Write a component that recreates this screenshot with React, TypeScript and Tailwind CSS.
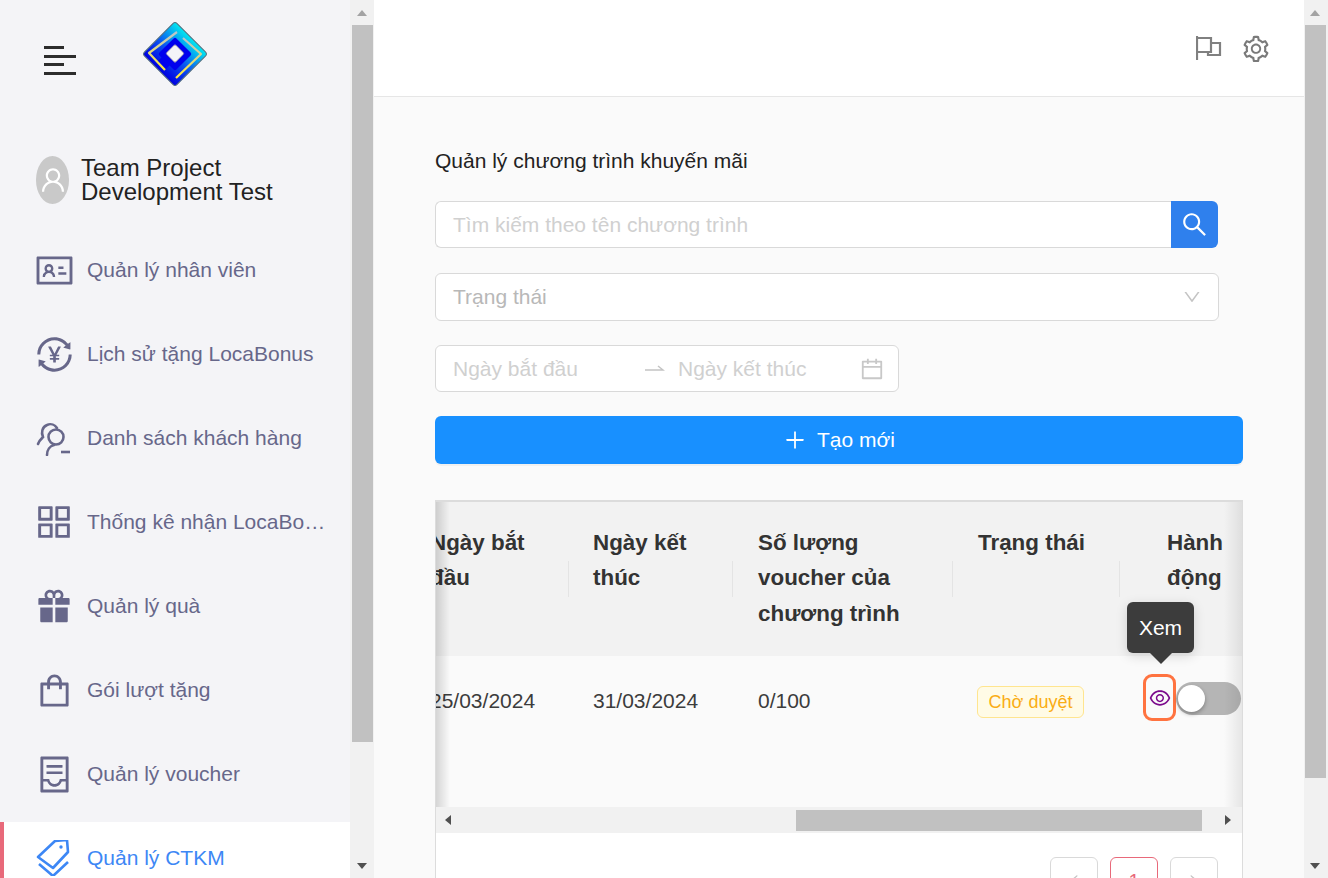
import React from "react";
import {
  AiFillGift,
  AiOutlineAppstore,
  AiOutlineCalendar,
  AiOutlineContainer,
  AiOutlineDown,
  AiOutlineEye,
  AiOutlineIdcard,
  AiOutlineLeft,
  AiOutlinePlus,
  AiOutlineRight,
  AiOutlineSearch,
  AiOutlineSetting,
  AiOutlineShopping,
  AiOutlineTransaction,
  AiOutlineUser,
} from "react-icons/ai";

const CustomerIcon = () => (
  <svg width="36" height="36" viewBox="0 0 36 36" fill="none" stroke="currentColor" strokeWidth="2.6" strokeLinecap="round">
    <path d="M2 24c1-3 3-5 5-7-2-4-1-10 4-12 4-2 8 0 10 3" />
    <circle cx="20" cy="17" r="7.5" />
    <path d="M11 35c0-5 3-9 7-10" />
    <path d="M25 32h9" strokeLinecap="butt" />
  </svg>
);

const TagIcon = () => (
  <svg width="36" height="36" viewBox="0 0 36 36" fill="none" stroke="currentColor" strokeWidth="2.6" strokeLinejoin="round">
    <path d="M2 17 19 1l12-1 1 12-15 16z" />
    <circle cx="25" cy="7" r="1.7" fill="currentColor" stroke="none" />
    <path d="M3 24l14 12 15-14" />
  </svg>
);

const FlagIcon = () => (
  <svg width="26" height="26" viewBox="0 0 26 26" fill="none" stroke="#808080" strokeWidth="2.2" className="mt-[1px]">
    <path d="M1 0v24" />
    <path d="M1 2h14v14H1" />
    <path d="M15 7h9v12H12v-3" />
  </svg>
);

const Logo = () => (
  <svg width="66" height="66" viewBox="0 0 66 66">
    <defs>
      <linearGradient id="logo-fill" x1="0" y1="0" x2="0" y2="1">
        <stop offset="0" stopColor="#00e8f0" />
        <stop offset="0.55" stopColor="#0a50f0" />
        <stop offset="1" stopColor="#0000e0" />
      </linearGradient>
      <linearGradient id="logo-line" x1="0" y1="0" x2="0" y2="1">
        <stop offset="0" stopColor="#b8c4cc" />
        <stop offset="1" stopColor="#ffe93c" />
      </linearGradient>
    </defs>
    <rect x="10" y="10" width="46" height="46" rx="3" transform="rotate(45 33 33)" fill="url(#logo-fill)" stroke="#56707f" strokeWidth="1" />
    <path d="M35 11 7 32l16 17" fill="none" stroke="url(#logo-line)" strokeWidth="2.2" strokeLinejoin="round" />
    <path d="M41 17 59 33 34 57" fill="none" stroke="url(#logo-line)" strokeWidth="2.2" strokeLinejoin="round" />
    <rect x="21" y="21" width="24" height="24" rx="2" transform="rotate(45 33 33)" fill="#0000ee" />
    <path d="M18 38l8 8" stroke="#0000ee" strokeWidth="5" />
    <rect x="26.5" y="26" width="13" height="13" rx="1.5" transform="rotate(45 33 32.5)" fill="#f4f4f8" stroke="#8a8aa0" strokeWidth="0.8" />
  </svg>
);

const menu = [
  { label: "Quản lý nhân viên", icon: <AiOutlineIdcard size={41} /> },
  { label: "Lịch sử tặng LocaBonus", icon: <AiOutlineTransaction size={41} /> },
  { label: "Danh sách khách hàng", icon: <CustomerIcon /> },
  { label: "Thống kê nhận LocaBonus", icon: <AiOutlineAppstore size={44} /> },
  { label: "Quản lý quà", icon: <AiFillGift size={40} /> },
  { label: "Gói lượt tặng", icon: <AiOutlineShopping size={41} /> },
  { label: "Quản lý voucher", icon: <AiOutlineContainer size={41} /> },
  { label: "Quản lý CTKM", icon: <TagIcon />, active: true },
];

const VScroll = ({ thumb, outer }: { thumb: string; outer: string }) => (
  <div className={`flex flex-col items-center shrink-0 h-[878px] bg-[#f1f1f1] ${outer}`}>
    <div className="h-[25px] flex items-center justify-center">
      <div className="w-0 h-0 border-x-[5.5px] border-x-transparent border-b-[6px] border-b-[#a3a3a3]" />
    </div>
    <div className={`w-[21px] bg-[#c1c1c1] ${thumb}`} />
    <div className="w-[21px] flex-1" />
    <div className="h-[25px] flex items-center justify-center">
      <div className="w-0 h-0 border-x-[5.5px] border-x-transparent border-t-[6px] border-t-[#505050]" />
    </div>
  </div>
);

const Sidebar = () => (
  <aside className="w-[350px] shrink-0 h-[878px] bg-[#f4f4f7] overflow-hidden">
    <div className="flex h-[156px]">
      <div className="ml-[44px] mt-[46px] w-[32px] flex flex-col gap-[5.5px]">
        <div className="h-[3px] w-[20px] bg-[#2c2c2c]" />
        <div className="h-[3px] w-[32px] bg-[#2c2c2c]" />
        <div className="h-[3px] w-[20px] bg-[#2c2c2c]" />
        <div className="h-[3px] w-[32px] bg-[#2c2c2c]" />
      </div>
      <div className="ml-[66px] mt-[21px]">
        <Logo />
      </div>
    </div>
    <div className="flex items-center pl-[36px] h-[48px]">
      <div className="w-[33px] h-[48px] rounded-[50%] bg-[#c9c9c9] flex items-center justify-center text-white">
        <AiOutlineUser size={30} />
      </div>
      <div className="ml-[12px] text-[24px] leading-[24px] text-[#222222]">
        <div>Team Project</div>
        <div>Development Test</div>
      </div>
    </div>
    <nav className="mt-[30px] flex flex-col gap-[12px]">
      {menu.map((item) => (
        <div
          key={item.label}
          className={`h-[72px] shrink-0 flex items-center pl-[32px] border-l-4 ${
            item.active
              ? "border-[#e8697a] bg-white text-[#3d87f5]"
              : "border-transparent text-[#67678a]"
          }`}
        >
          <div className="w-[36px] h-[36px] flex items-center justify-center shrink-0 [&>svg]:shrink-0">{item.icon}</div>
          <span className="ml-[15px] w-[240px] truncate text-[21px] leading-[28px]">{item.label}</span>
        </div>
      ))}
    </nav>
  </aside>
);

const columns = [
  { title: "Ngày bắt đầu", w: "w-[163px]", pl: "pl-[24px] pr-[24px]" },
  { title: "Ngày kết thúc", w: "w-[164px]", pl: "pl-[24px] pr-[24px]" },
  { title: "Số lượng voucher của chương trình", w: "w-[220px]", pl: "pl-[25px] pr-[40px]" },
  { title: "Trạng thái", w: "w-[167px]", pl: "pl-[25px]" },
  { title: "Hành động", w: "w-[123px]", pl: "pl-[47px] pr-[10px]" },
];

const DataTable = () => (
  <div className="relative w-[808px] mt-[36px] border-t-2 border-x border-[#dcdcdc] bg-white">
    <div className="overflow-hidden">
      <div className="ml-[-30px] w-[837px]">
        <div className="flex h-[154px] bg-[#f2f2f2] text-[22.4px] leading-[35.5px] font-bold text-[#333333]">
          {columns.map((c, i) => (
            <div key={c.title} className={`relative shrink-0 pt-[22.5px] ${c.w} ${c.pl}`}>
              {c.title}
              {i < 4 && <div className="absolute right-0 top-[59px] w-[1px] h-[36px] bg-[#e4e4e4]" />}
            </div>
          ))}
        </div>
        <div className="flex h-[151px] bg-[#fafafa] text-[21px] leading-[28px] text-[#3c3c3c]">
          <div className="w-[163px] shrink-0 pl-[24px] pt-[31px]">25/03/2024</div>
          <div className="w-[164px] shrink-0 pl-[24px] pt-[31px]">31/03/2024</div>
          <div className="w-[220px] shrink-0 pl-[25px] pt-[31px]">0/100</div>
          <div className="w-[167px] shrink-0 pl-[24px] pt-[30px]">
            <span className="inline-flex items-center justify-center w-[107px] h-[32px] rounded-[6px] border border-[#ffe58f] bg-[#fffbe6] text-[18px] text-[#faad14]">
              Chờ duyệt
            </span>
          </div>
          <div className="w-[123px] shrink-0 pl-[23px] pt-[18px] flex items-start">
            <div className="w-[33px] h-[47px] shrink-0 rounded-[9px] border-[3.5px] border-[#ff7340] flex items-center justify-center text-[#7b0a8c]">
              <AiOutlineEye size={24} />
            </div>
            <div className="relative w-[65px] h-[33px] mt-[8px] rounded-full bg-[#b5b5b5] shrink-0">
              <div className="absolute left-[2px] top-[3px] w-[27px] h-[27px] rounded-full bg-white shadow-[0_2px_4px_rgba(0,0,0,0.3)]" />
            </div>
          </div>
        </div>
      </div>
    </div>
    <div className="flex items-center h-[26px] bg-[#f1f1f1]">
      <div className="w-0 h-0 ml-[9px] border-y-[5.5px] border-y-transparent border-r-[6px] border-r-[#505050]" />
      <div className="ml-[345px] w-[406px] h-[21px] bg-[#c1c1c1]" />
      <div className="w-0 h-0 ml-[23px] border-y-[5.5px] border-y-transparent border-l-[6px] border-l-[#505050]" />
    </div>
    <div className="flex justify-end gap-[12px] pt-[24px] pr-[24px] h-[100px]">
      <div className="w-[48px] h-[48px] rounded-[6px] border border-[#d9d9d9] flex items-center justify-center text-[#c4c4c4]">
        <AiOutlineLeft size={16} />
      </div>
      <div className="w-[48px] h-[48px] rounded-[6px] border border-[#e8697a] flex items-center justify-center text-[20px] text-[#e8697a]">
        1
      </div>
      <div className="w-[48px] h-[48px] rounded-[6px] border border-[#d9d9d9] flex items-center justify-center text-[#c4c4c4]">
        <AiOutlineRight size={16} />
      </div>
    </div>
    {/* fixed column shadows */}
    <div className="absolute left-0 top-0 h-[305px] w-[14px] bg-gradient-to-r from-black/15 to-transparent" />
    <div className="absolute right-0 top-0 h-[305px] w-[18px] bg-gradient-to-l from-black/8 to-transparent" />
    {/* tooltip */}
    <div className="absolute left-[691px] top-[100px] flex flex-col items-center">
      <div className="w-[67px] h-[51px] rounded-[6px] bg-[#3c3c3c] text-white text-[21px] flex items-center justify-center shadow-[0_3px_12px_rgba(0,0,0,0.15)]">
        Xem
      </div>
      <div className="w-0 h-0 border-x-[11px] border-x-transparent border-t-[11px] border-t-[#3c3c3c]" />
    </div>
  </div>
);

export default function App() {
  return (
    <div className="flex w-[1328px] h-[878px] overflow-hidden bg-[#fafafa] font-['Liberation_Sans',Arial,sans-serif]">
      <Sidebar />
      <VScroll outer="w-[24px]" thumb="h-[717px]" />
      <main className="w-[930px] shrink-0 h-[878px] overflow-hidden">
        <header className="h-[97px] bg-white border-b border-[#e6e6e6] flex items-start justify-end gap-[19px] pr-[33px] pt-[35px]">
          <FlagIcon />
          <AiOutlineSetting size={30} className="text-[#7a7a7a] -mt-[1px]" />
        </header>
        <section className="pl-[61px]">
          <h1 className="mt-[50px] text-[21px] leading-[28px] font-normal text-[#222222]">
            Quản lý chương trình khuyến mãi
          </h1>
          <div className="mt-[26px] flex w-[783px] h-[47px] text-[21px]">
            <div className="flex-1 flex items-center pl-[17px] bg-white border border-r-0 border-[#d9d9d9] rounded-l-[6px] text-[#d0d0d0]">
              Tìm kiếm theo tên chương trình
            </div>
            <div className="w-[47px] bg-[#2f80ed] rounded-r-[6px] flex items-center justify-center text-white">
              <AiOutlineSearch size={29} />
            </div>
          </div>
          <div className="mt-[25px] flex items-center justify-between w-[784px] h-[48px] pl-[17px] pr-[16px] bg-white border border-[#d9d9d9] rounded-[6px] text-[21px] text-[#b8b8b8]">
            Trạng thái
            <AiOutlineDown size={20} className="text-[#c4c4c4]" />
          </div>
          <div className="mt-[24px] flex items-center w-[464px] h-[47px] pl-[17px] bg-white border border-[#d9d9d9] rounded-[6px] text-[21px] text-[#d0d0d0]">
            <span className="w-[192px]">Ngày bắt đầu</span>
            <svg width="20" height="10" viewBox="0 0 20 10" fill="none" stroke="#c4c4c4" strokeWidth="1.5">
              <path d="M0 6h18l-5-4" />
            </svg>
            <span className="ml-[13px] w-[181px]">Ngày kết thúc</span>
            <AiOutlineCalendar size={26} className="text-[#c8c8c8]" />
          </div>
          <div className="mt-[24px] flex items-center justify-center gap-[10px] w-[808px] h-[48px] rounded-[6px] bg-[#1890ff] text-white text-[21px] shadow-[0_2px_0_rgba(0,0,0,0.04)]">
            <AiOutlinePlus size={24} />
            Tạo mới
          </div>
          <DataTable />
        </section>
      </main>
      <VScroll outer="w-[24px] pr-[2px]" thumb="h-[753px]" />
    </div>
  );
}
